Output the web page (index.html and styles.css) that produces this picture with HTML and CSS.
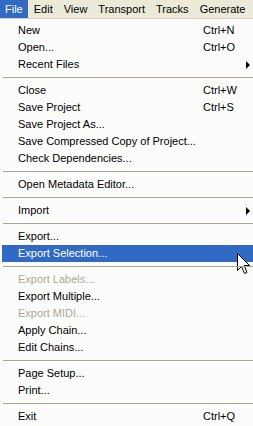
FILE: index.html
```html
<!DOCTYPE html>
<html lang="en">
<head>
    <meta charset="UTF-8">
    <title>File menu</title>
    <link rel="stylesheet" href="styles.css">
</head>
<body>
    <div class="menubar">
        <span class="menubar-item open">File</span>
        <span class="menubar-item">Edit</span>
        <span class="menubar-item">View</span>
        <span class="menubar-item">Transport</span>
        <span class="menubar-item">Tracks</span>
        <span class="menubar-item">Generate</span>
    </div>

    <div class="menu">
        <div class="item"><span class="label">New</span><span class="key">Ctrl+N</span></div>
        <div class="item"><span class="label">Open...</span><span class="key">Ctrl+O</span></div>
        <div class="item"><span class="label">Recent Files</span><span class="key"><span class="arrow"></span></span></div>
        <div class="sep"></div>
        <div class="item"><span class="label">Close</span><span class="key">Ctrl+W</span></div>
        <div class="item"><span class="label">Save Project</span><span class="key">Ctrl+S</span></div>
        <div class="item"><span class="label">Save Project As...</span></div>
        <div class="item"><span class="label">Save Compressed Copy of Project...</span></div>
        <div class="item"><span class="label">Check Dependencies...</span></div>
        <div class="sep"></div>
        <div class="item"><span class="label">Open Metadata Editor...</span></div>
        <div class="sep"></div>
        <div class="item"><span class="label">Import</span><span class="key"><span class="arrow"></span></span></div>
        <div class="sep"></div>
        <div class="item"><span class="label">Export...</span></div>
        <div class="item active">
            <span class="label">Export Selection...</span>
            <!-- mouse pointer sitting over the highlighted row -->
            <svg class="cursor" width="13" height="22" viewBox="0 0 13 22">
                <path d="M0.5 0.5 L0.5 17.5 L4.5 13.5 L7.5 20.5 L10 19.5 L7.2 12.5 L12.5 12.5 Z" fill="#fff" stroke="#000" stroke-width="1"/>
            </svg>
        </div>
        <div class="sep"></div>
        <div class="item disabled"><span class="label">Export Labels...</span></div>
        <div class="item"><span class="label">Export Multiple...</span></div>
        <div class="item disabled"><span class="label">Export MIDI...</span></div>
        <div class="item"><span class="label">Apply Chain...</span></div>
        <div class="item"><span class="label">Edit Chains...</span></div>
        <div class="sep"></div>
        <div class="item"><span class="label">Page Setup...</span></div>
        <div class="item"><span class="label">Print...</span></div>
        <div class="sep"></div>
        <div class="item"><span class="label">Exit</span><span class="key">Ctrl+Q</span></div>
    </div>
</body>
</html>
```

FILE: styles.css
```css
body {
    margin: 0;
    font-family: 'Liberation Sans', Arial, sans-serif;
    font-size: 11px;
    color: #000;
    background-color: #fcfcfa;
    overflow: hidden;
}

.menubar {
    display: flex;
    height: 19px;
    background-color: #ece9d8;
    border-bottom: 1px solid #d6d2c2;
    box-sizing: border-box;
}

.menubar-item {
    padding: 0 5px;
    line-height: 18px;
    margin-right: 1px;
}

.menubar-item.open {
    background-color: #316ac5;
    color: white;
}

.menu {
    padding: 3px 0 0 2px;
}

.item {
    display: grid;
    grid-template-columns: 185px 1fr;
    height: 17px;
    line-height: 17px;
    padding-left: 16px;
    position: relative;
    white-space: nowrap;
}

.key {
    display: flex;
    align-items: center;
}

.arrow {
    margin-left: auto;
    margin-right: 3px;
    width: 0;
    height: 0;
    border-left: 4px solid #000;
    border-top: 4px solid transparent;
    border-bottom: 4px solid transparent;
}

.item.active {
    background-color: #316ac5;
    color: white;
}

.item.disabled {
    color: #aca899;
}

.sep {
    height: 9px;
    margin-left: 1px;
    position: relative;
}

.sep:before {
    content: '';
    position: absolute;
    left: 0;
    right: 0;
    top: 4px;
    border-top: 1px solid #aca899;
}

.cursor {
    position: absolute;
    left: 235px;
    top: 8px;
}
```
